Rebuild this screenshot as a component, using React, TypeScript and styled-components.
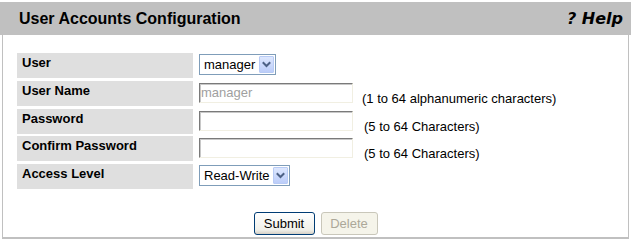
import React from 'react'
import styled, { createGlobalStyle } from 'styled-components';


type FieldRow =
    | { _id: string; label: string; kind: 'select'; value: string; options: string[]; width: number }
    | { _id: string; label: string; kind: 'input'; value: string; disabled?: boolean; hint: string; hintGap: number };

const rows: FieldRow[] = [
    { _id: 'user', label: 'User', kind: 'select', value: 'manager', options: ['manager', 'operator'], width: 77 },
    { _id: 'username', label: 'User Name', kind: 'input', value: 'manager', disabled: true, hint: '(1 to 64 alphanumeric characters)', hintGap: 9 },
    { _id: 'password', label: 'Password', kind: 'input', value: '', hint: '(5 to 64 Characters)', hintGap: 11 },
    { _id: 'confirm', label: 'Confirm Password', kind: 'input', value: '', hint: '(5 to 64 Characters)', hintGap: 11 },
    { _id: 'access', label: 'Access Level', kind: 'select', value: 'Read-Write', options: ['Read-Write', 'Read-Only'], width: 91 },
]


const App = () => {
    return (
        <Page>
            <GlobalStyle />
            <Header>
                <Title>User Accounts Configuration</Title>
                <Help>? Help</Help>
            </Header>
            <Panel>
                <FormTable>
                    {rows.map((row) => (
                        <React.Fragment key={row._id}>
                            <LabelCell>{row.label}</LabelCell>
                            <ValueCell>
                                {row.kind === 'select' ? (
                                    <SelectWrap $width={row.width}>
                                        <NativeSelect defaultValue={row.value}>
                                            {row.options.map((o) => <option key={o}>{o}</option>)}
                                        </NativeSelect>
                                        <ArrowBox>
                                            <svg width="13" height="15" viewBox="0 0 13 15">
                                                <path d="M3.5 6 L6.5 9 L9.5 6" fill="none" stroke="#4d6185" strokeWidth="2" strokeLinecap="square" />
                                            </svg>
                                        </ArrowBox>
                                    </SelectWrap>
                                ) : (
                                    <>
                                        <TextInput
                                            type={row._id === 'username' ? 'text' : 'password'}
                                            defaultValue={row.value}
                                            disabled={row.disabled}
                                        />
                                        <Hint $gap={row.hintGap}>{row.hint}</Hint>
                                    </>
                                )}
                            </ValueCell>
                        </React.Fragment>
                    ))}
                </FormTable>
                <ButtonRow>
                    <Button $width={61}>Submit</Button>
                    <Button $width={57} disabled>Delete</Button>
                </ButtonRow>
            </Panel>
        </Page>
    )
}

const GlobalStyle = createGlobalStyle`
    body{
        margin:0;
        background:#fff;
        font-family:"Liberation Sans", Arial, sans-serif;
        color:#000;
    }
`;

const Page = styled.div`
    width:631px;
    padding-top:2px;
`;

const Header = styled.div`
    display:flex;
    align-items:center;
    justify-content:space-between;
    height:33px;
    padding:0 8px 0 19px;
    background:#c0c0c0;
`;

const Title = styled.div`
    font-size:16px;
    font-weight:bold;
    line-height:18px;
    padding-top:1px;
`;

const Help = styled.div`
    font-family:"DejaVu Sans", sans-serif;
    font-size:16px;
    font-weight:bold;
    font-style:italic;
    line-height:18px;
    padding-top:1px;
`;

const Panel = styled.div`
    margin:0 2px;
    padding:18px 0 2px;
    border:1px solid #c0c0c0;
    border-top:none;
    border-bottom-width:2px;
`;

const FormTable = styled.div`
    display:grid;
    grid-template-columns:176px 1fr;
    grid-auto-rows:25px;
    column-gap:3px;
    row-gap:2.75px;
    margin-left:14px;
`;

const LabelCell = styled.div`
    background:#dfdfdf;
    padding:2px 5px;
    font-size:13px;
    font-weight:bold;
    line-height:15px;
`;

const ValueCell = styled.div`
    display:flex;
    align-items:flex-start;
    padding:2px 0 0 3px;
`;

const SelectWrap = styled.div<{ $width: number }>`
    position:relative;
    width:${(p) => p.$width}px;
    height:21px;
    margin-top:-1px;
`;

const NativeSelect = styled.select`
    appearance:none;
    width:100%;
    height:100%;
    box-sizing:border-box;
    border:1px solid #7f9db9;
    border-radius:0;
    background:#fff;
    padding:0 0 0 4px;
    font-family:"Liberation Sans", Arial, sans-serif;
    font-size:13px;
    color:#000;
    outline:none;
`;

const ArrowBox = styled.span`
    position:absolute;
    top:2px;
    right:2px;
    width:15px;
    height:17px;
    box-sizing:border-box;
    display:flex;
    align-items:center;
    justify-content:center;
    border:1px solid #b8cbf5;
    border-radius:1px;
    background:linear-gradient(#dde7fe, #bccdf9);
    pointer-events:none;
`;

const TextInput = styled.input`
    width:154px;
    height:20px;
    box-sizing:border-box;
    margin:0;
    padding:0 1px;
    border:1px solid;
    border-color:#7a7a7a #f1efe2 #f1efe2 #7a7a7a;
    box-shadow:inset 1px 1px 0 #c8c8c8;
    background:#fff;
    font-family:"Liberation Sans", Arial, sans-serif;
    font-size:13px;
    color:#000;
    outline:none;

    &:disabled{
        color:#a0a0a0;
        background:#fff;
    }
`;

const Hint = styled.span<{ $gap: number }>`
    align-self:flex-end;
    margin-left:${(p) => p.$gap}px;
    font-size:13px;
    line-height:15px;
`;

const ButtonRow = styled.div`
    display:flex;
    justify-content:center;
    gap:6px;
    margin-top:23px;
`;

const Button = styled.button<{ $width: number }>`
    width:${(p) => p.$width}px;
    height:23px;
    padding:0;
    border:1px solid #003c74;
    border-radius:3px;
    background:linear-gradient(#ffffff, #f0f0ea 80%, #d6d0c5);
    font-family:"Liberation Sans", Arial, sans-serif;
    font-size:13px;
    color:#000;

    &:disabled{
        border-color:#c9c7ba;
        background:#f5f4ea;
        color:#aca899;
    }
`;


export default App;
